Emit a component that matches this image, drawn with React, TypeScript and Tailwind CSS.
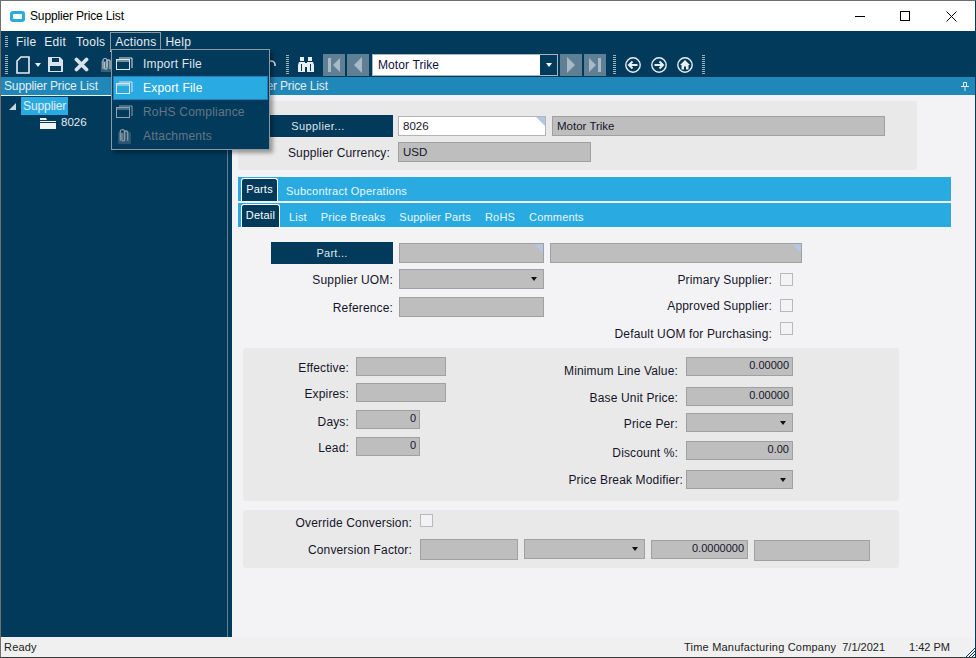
import { ReactNode } from "react"

const FONT = "font-['Liberation_Sans',Arial,sans-serif]"

type FieldProps = {
    w: string
    h?: string
    text?: string
    right?: boolean
    white?: boolean
    corner?: boolean
    drop?: boolean
    className?: string
}

const Field = ({ w, h = "h-5", text, right, white, corner, drop, className = "" }: FieldProps) => {
    return (
        <div
            className={`relative flex shrink-0 items-center border text-[#15152a] ${w} ${h} ${
                white ? "border-[#b4b4b4] bg-white" : "border-[#a0a0a0] bg-[#bebebe]"
            } ${right ? "justify-end pb-[2px] pr-[3px] text-[11px]" : "pl-1 pt-[2px] text-[11.5px]"} ${className}`}
        >
            {text}
            {corner && (
                <svg className="absolute right-0 top-0" width="9" height="9" viewBox="0 0 9 9">
                    <path d="M0 0h9v9z" fill="#b4c6e0" />
                </svg>
            )}
            {drop && (
                <svg className="absolute right-[6px] top-[7px]" width="6" height="4" viewBox="0 0 6 4">
                    <path d="M0 0h6L3 4z" fill="#111" />
                </svg>
            )}
        </div>
    )
}

const Label = ({ w, children, className = "" }: { w: string; children: ReactNode; className?: string }) => {
    return <div className={`shrink-0 text-right text-[12px] tracking-[0.15px] text-[#15152a] ${w} ${className}`}>{children}</div>
}

const Check = () => {
    return <div className="h-[13px] w-[13px] shrink-0 border border-[#b9b9b9] bg-[#f3f3f5]" />
}

const NavBtn = ({ dir, end }: { dir: "l" | "r"; end?: boolean }) => {
    return (
        <div className="flex h-[22px] w-[22px] items-center justify-center bg-[#5f7f94]">
            <svg width="14" height="16" viewBox="0 0 14 16" fill="#a9bac6">
                {dir === "l" ? <path d={end ? "M6 8l7-7v14zM1 1h3v14H1z" : "M3 8l8-8v16z"} /> : <path d={end ? "M8 8L1 1v14zM10 1h3v14h-3z" : "M11 8L3 0v16z"} />}
            </svg>
        </div>
    )
}

const Circle = ({ children }: { children: ReactNode }) => {
    return (
        <svg width="16" height="16" viewBox="0 0 16 16" fill="none" stroke="#e8eef2" strokeWidth="1.4">
            <circle cx="8" cy="8" r="7.2" />
            {children}
        </svg>
    )
}

const Grip = () => {
    return <div className="h-[19px] w-[3px] shrink-0 bg-[repeating-linear-gradient(to_bottom,#9fb2bf_0,#9fb2bf_1px,transparent_1px,transparent_2px)]" />
}

const WindowIcon = ({ muted }: { muted?: boolean }) => {
    const c = muted ? "#8fa3b1" : "#dfe6ea"
    return (
        <svg className="shrink-0" width="17" height="14" viewBox="0 0 17 14" fill="none">
            <path d="M3 1h13v10" stroke={c} />
            <rect x="0.5" y="2.5" width="13" height="10" stroke={c} />
            <path d="M1 3h12v2H1z" fill={c} opacity="0.5" />
        </svg>
    )
}

const ClipIcon = ({ color = "#8b9ba6", size = 15 }: { color?: string; size?: number }) => {
    return (
        <svg className="shrink-0" width={size} height={size + 1} viewBox="0 0 15 16" fill="none">
            <rect x="2" y="4" width="12" height="11" fill={color} opacity="0.3" />
            <path d="M4 12V3.5a2 2 0 0 1 4 0V11a1.2 1.2 0 0 1-2.4 0V5" stroke={color} strokeWidth="1.2" />
            <path d="M8 10V3.5a2 2 0 0 1 3 0V12" stroke={color} strokeWidth="1.2" />
        </svg>
    )
}

const ActionsMenu = () => {
    const item = "flex h-6 items-center gap-[10px] pl-[2px] text-[12px] tracking-[0.2px]"
    return (
        <div className="absolute left-[110px] top-[48px] z-10 h-[101px] w-[159px] border border-[#8a9aa5] bg-[#023a5c] px-[1px] pt-[2px] shadow-[3px_3px_4px_rgba(0,0,0,0.35)]">
            <div className={`${item} border border-transparent text-[#dfe6ea]`}>
                <WindowIcon />
                Import File
            </div>
            <div className={`${item} border border-[#1b7fc0] bg-[#29abe2] text-white`}>
                <WindowIcon />
                Export File
            </div>
            <div className={`${item} border border-transparent text-[#647784]`}>
                <WindowIcon muted />
                RoHS Compliance
            </div>
            <div className={`${item} border border-transparent text-[#647784]`}>
                <div className="w-[17px]">
                    <ClipIcon size={16} />
                </div>
                Attachments
            </div>
        </div>
    )
}

const TopBars = () => {
    return (
        <div className="bg-[#023a5c] text-[#e6ecf0]">
            <div className="flex h-[21px] items-center pl-1 text-[12px] tracking-[0.25px]">
                <div className="mr-[8px] h-3 w-[3px] bg-[repeating-linear-gradient(to_bottom,#9fb2bf_0,#9fb2bf_1px,transparent_1px,transparent_2px)]" />
                <span className="mr-[8px]">File</span>
                <span className="mr-[10px]">Edit</span>
                <span className="mr-[5px]">Tools</span>
                <span className="mr-[4px] border border-[#8a9aa5] border-b-white px-1">Actions</span>
                <span>Help</span>
            </div>
            <div className="flex h-[25px] items-center pl-1">
                <Grip />
                <div className="ml-[8px] flex w-[270px] items-center">
                    <svg width="14" height="18" viewBox="0 0 14 18" fill="none" stroke="#e8eef2" strokeWidth="1.6">
                        <path d="M5 1h8v16H1V5z" />
                    </svg>
                    <svg className="ml-[5px]" width="6" height="4" viewBox="0 0 6 4">
                        <path d="M0 0h6L3 4z" fill="#e8eef2" />
                    </svg>
                    <svg className="ml-[6px]" width="17" height="17" viewBox="0 0 17 17">
                        <path d="M1 1h12l3 3v12H1zM5 2v4h7V2zM3 10v5h11v-5z" fill="#d9e2e8" fillRule="evenodd" />
                    </svg>
                    <svg className="ml-[10px]" width="15" height="15" viewBox="0 0 15 15" stroke="#d9e2e8" strokeWidth="3.8" strokeLinecap="round">
                        <path d="M2.5 2.5l10 10M12.5 2.5l-10 10" />
                    </svg>
                    <div className="ml-[10px]">
                        <ClipIcon color="#b4bec5" />
                    </div>
                    <svg className="ml-auto mr-[10px]" width="10" height="10" viewBox="0 0 10 10" fill="none" stroke="#d9e2e8" strokeWidth="1.6">
                        <path d="M1 9V5a4 4 0 0 1 8 0v1" />
                    </svg>
                </div>
                <Grip />
                <svg className="ml-[9px] mr-[9px]" width="16" height="15" viewBox="0 0 16 15" fill="#e8eef2">
                    <path d="M2 0h4v4H2zM10 0h4v4h-4zM1 5h6v10H0V8zM9 5h6l1 3v7H9zM7 6h2v4H7z" />
                    <path d="M3 7h1v7H3zM12 7h1v7h-1z" fill="#023a5c" />
                </svg>
                <div className="flex items-center gap-[2px]">
                    <NavBtn dir="l" end />
                    <NavBtn dir="l" />
                </div>
                <div className="ml-[3px] flex h-[22px] w-[186px] items-center border border-[#a9b5bd] bg-white pl-[5px] text-[12px] tracking-[0.1px] text-[#101040]">
                    Motor Trike
                    <div className="ml-auto flex h-full w-[17px] items-center justify-center bg-[#023a5c]">
                        <svg width="6" height="4" viewBox="0 0 6 4">
                            <path d="M0 0h6L3 4z" fill="#fff" />
                        </svg>
                    </div>
                </div>
                <div className="ml-[2px] flex items-center gap-[2px]">
                    <NavBtn dir="r" />
                    <NavBtn dir="r" end />
                </div>
                <div className="ml-[7px]">
                    <Grip />
                </div>
                <div className="ml-[9px] flex items-center gap-[10px]">
                    <Circle>
                        <path d="M12.5 8H4M7.5 4.5L4 8l3.5 3.5" strokeWidth="2" />
                    </Circle>
                    <Circle>
                        <path d="M3.5 8H12M8.5 4.5L12 8l-3.5 3.5" strokeWidth="2" />
                    </Circle>
                    <Circle>
                        <path d="M8 3L3 8h1.5v4.5H7V9.5h2v3h2.5V8H13z" fill="#e8eef2" stroke="none" />
                    </Circle>
                </div>
                <div className="ml-[9px]">
                    <Grip />
                </div>
            </div>
            <div className="flex h-[18px] items-center bg-[#1f88b8] text-[12px] tracking-[-0.15px]">
                <div className="w-[233px] pl-[3px]">Supplier Price List</div>
                <div>Supplier Price List</div>
                <svg className="ml-auto mr-[6px]" width="8" height="9" viewBox="0 0 8 9" fill="none" stroke="#e6ecf0">
                    <path d="M0 4.5h8M2.5 0.5h3v4h-3zM4 5v4" />
                </svg>
            </div>
        </div>
    )
}

const Tree = () => {
    return (
        <div className="mt-[1px] flex w-[231px] shrink-0 border-r-[4px] border-[#023a5c] bg-[#023a5c] text-[12px] text-[#e6ecf0]">
            <div className="flex w-[227px] flex-col border-r border-[#5f7f94] pl-[7px] pt-[1px]">
                <div className="flex items-center">
                    <svg width="9" height="9" viewBox="0 0 9 9">
                        <path d="M8 1v7H1z" fill="#c9d4db" />
                    </svg>
                    <span className="ml-[4px] bg-[#29abe2] px-[2px] tracking-[-0.1px]">Supplier</span>
                </div>
                <div className="ml-[32px] mt-[-1px] flex items-center">
                    <svg width="16" height="12" viewBox="0 0 16 12">
                        <path d="M0 3V1h6l1 2z M0 4h16v1H0z M0 6h16v6H0z" fill="#f2f4f6" />
                    </svg>
                    <span className="ml-[5px] text-[11.5px]">8026</span>
                </div>
            </div>
        </div>
    )
}

const TabBars = () => {
    const tab = "flex items-center justify-center pb-[2px] text-[11px] tracking-[0.2px] border border-b-0 border-white rounded-t-[3px] bg-[#023a5c] text-white"
    const link = "text-[11px] tracking-[0.18px] text-[#eaf6fc]"
    return (
        <div className="ml-[6px] mr-[24px] mt-[7px]">
            <div className="flex h-6 items-end bg-[#29abe2] pl-[3px]">
                <div className={`${tab} h-[23px] w-[37px]`}>Parts</div>
                <span className="mb-[2px] ml-[8px] text-[11px] tracking-[0.25px] text-[#eaf6fc]">Subcontract Operations</span>
            </div>
            <div className="mt-[2px] flex h-6 items-end bg-[#29abe2] pl-[3px]">
                <div className={`${tab} h-[23px] w-[39px]`}>Detail</div>
                <div className="mb-[2px] ml-[9px] flex gap-[14px]">
                    <span className={link}>List</span>
                    <span className={link}>Price Breaks</span>
                    <span className={link}>Supplier Parts</span>
                    <span className={link}>RoHS</span>
                    <span className={link}>Comments</span>
                </div>
            </div>
        </div>
    )
}

const Left = ({ label, w, value, right, mt = "mt-[7px]", lp = "pt-[2px]" }: { label: string; w: string; value?: string; right?: boolean; mt?: string; lp?: string }) => {
    return (
        <div className={`flex h-[19px] items-center ${mt}`}>
            <Label w="w-[105px]" className={`pr-[7px] ${lp}`}>
                {label}
            </Label>
            <Field w={w} h="h-[19px]" text={value} right={right} />
        </div>
    )
}

const Right = ({ label, value, drop, pr = "pr-[8px]", lp = "", mt }: { label: string; value?: string; drop?: boolean; pr?: string; lp?: string; mt: string }) => {
    return (
        <div className={`flex h-[19px] items-center justify-end ${mt}`}>
            <Label w="w-[170px]" className={`${pr} ${lp}`}>
                {label}
            </Label>
            <Field w="w-[107px]" h="h-[19px]" text={value} right drop={drop} />
        </div>
    )
}

const App = () => {
    return (
        <div className={`relative flex h-[658px] w-[976px] flex-col overflow-hidden border border-b-[#3a3a3a] border-l-[#6f6f6f] border-r-[#023a5c] border-t-[#6f6f6f] bg-white ${FONT}`}>
            <div className="flex h-[30px] shrink-0 items-center pl-[9px] text-[12px] text-black">
                <svg width="15" height="11" viewBox="0 0 15 11">
                    <rect width="15" height="11" rx="3" fill="#29abe2" />
                    <rect x="3" y="3" width="9" height="5" rx="1" fill="#fff" />
                </svg>
                <span className="ml-[5px] tracking-[-0.15px]">Supplier Price List</span>
                <div className="ml-auto flex items-center">
                    <svg width="10" height="1" viewBox="0 0 10 1" className="mr-[35px]">
                        <path d="M0 0h10v1H0z" fill="#000" />
                    </svg>
                    <svg width="10" height="10" viewBox="0 0 10 10" className="mr-[36px]" fill="none" stroke="#000">
                        <rect x="0.5" y="0.5" width="9" height="9" />
                    </svg>
                    <svg width="11" height="11" viewBox="0 0 11 11" className="mr-[18px]" fill="none" stroke="#000">
                        <path d="M0.5 0.5l10 10M10.5 0.5l-10 10" />
                    </svg>
                </div>
            </div>

            <TopBars />
            <ActionsMenu />

            <div className="flex min-h-0 flex-1 bg-[#f3f3f6]">
                <Tree />
                <div className="flex-1">
                    <div className="ml-[6px] mt-[6px] h-[69px] w-[679px] rounded-[3px] bg-[#e9e9e9] pl-[2px] pt-[14px]">
                        <div className="flex items-center">
                            <div className="flex h-[22px] w-[153px] items-center justify-center bg-[#023a5c] pl-[3px] text-[11px] tracking-[0.4px] text-[#dfe6ea]">Supplier...</div>
                            <Field w="w-[148px]" white corner text="8026" className="ml-[5px]" />
                            <Field w="w-[333px]" text="Motor Trike" className="ml-[6px]" />
                        </div>
                        <div className="mt-[5px] flex h-5 items-center">
                            <Label w="w-[150px]" className="pt-[2px]">
                                Supplier Currency:
                            </Label>
                            <Field w="w-[193px]" text="USD" className="ml-[8px]" />
                        </div>
                    </div>

                    <TabBars />

                    <div className="ml-[39px] mt-[15px] flex items-center">
                        <div className="flex h-[22px] w-[122px] items-center justify-center bg-[#023a5c] text-[11px] tracking-[0.25px] text-[#dfe6ea]">Part...</div>
                        <Field w="w-[145px]" corner className="ml-[6px]" />
                        <Field w="w-[252px]" corner className="ml-[6px]" />
                    </div>

                    <div className="ml-[39px] mt-[5px] flex h-[67px] w-[522px] justify-between">
                        <div>
                            <div className="flex h-5 items-center">
                                <Label w="w-[122px]" className="pt-[2px]">
                                    Supplier UOM:
                                </Label>
                                <Field w="w-[145px]" drop className="ml-[6px]" />
                            </div>
                            <div className="mt-[8px] flex h-5 items-center">
                                <Label w="w-[122px]" className="pt-[2px]">
                                    Reference:
                                </Label>
                                <Field w="w-[145px]" className="ml-[6px]" />
                            </div>
                        </div>
                        <div className="flex flex-col items-end pt-[4px] text-[12px]">
                            <div className="flex h-[13px] items-center gap-[8px]">
                                <Label w="w-[170px]">Primary Supplier:</Label>
                                <Check />
                            </div>
                            <div className="mt-[13px] flex h-[13px] items-center gap-[8px]">
                                <Label w="w-[170px]">Approved Supplier:</Label>
                                <Check />
                            </div>
                            <div className="mt-[10px] flex h-[13px] items-center gap-[8px]">
                                <Label w="w-[170px]" className="pt-[10px]">
                                    Default UOM for Purchasing:
                                </Label>
                                <Check />
                            </div>
                        </div>
                    </div>

                    <div className="ml-[11px] mt-[12px] flex h-[153px] w-[656px] rounded-[3px] bg-[#e9e9e9] pt-[9px]">
                        <div className="w-[210px] pl-[8px]">
                            <Left label="Effective:" w="w-[90px]" mt="mt-0" />
                            <Left label="Expires:" w="w-[90px]" />
                            <Left label="Days:" w="w-[64px]" value="0" right mt="mt-[8px]" lp="pt-[4px]" />
                            <Left label="Lead:" w="w-[64px]" value="0" right mt="mt-[8px]" />
                        </div>
                        <div className="ml-[113px] w-[227px]">
                            <Right label="Minimum Line Value:" value="0.00000" mt="mt-0" lp="pt-[8px]" />
                            <Right label="Base Unit Price:" value="0.00000" mt="mt-[11px]" lp="pt-[2px]" />
                            <Right label="Price Per:" drop mt="mt-[7px]" lp="pt-[2px]" />
                            <Right label="Discount %:" value="0.00" mt="mt-[9px]" lp="pt-[4px]" />
                            <Right label="Price Break Modifier:" drop pr="pr-[3px]" mt="mt-[10px]" />
                        </div>
                    </div>

                    <div className="ml-[11px] mt-[9px] h-[58px] w-[656px] rounded-[3px] bg-[#e9e9e9] pt-[4px]">
                        <div className="flex h-[13px] items-center">
                            <Label w="w-[169px]" className="pt-[4px]">
                                Override Conversion:
                            </Label>
                            <div className="ml-[8px]">
                                <Check />
                            </div>
                        </div>
                        <div className="mt-[12px] flex items-start">
                            <Label w="w-[169px]" className="pt-[2px]">
                                Conversion Factor:
                            </Label>
                            <Field w="w-[98px]" h="h-[21px]" className="ml-[8px]" />
                            <Field w="w-[121px]" drop className="ml-[6px]" />
                            <Field w="w-[97px]" h="h-[19px]" text="0.0000000" right className="ml-[6px] mt-[1px]" />
                            <Field w="w-[116px]" h="h-[21px]" className="ml-[6px] mt-[1px]" />
                        </div>
                    </div>
                </div>
            </div>

            <div className="flex h-5 shrink-0 items-center bg-[#f0f0f0] pl-[3px] pt-[1px] text-[11px] text-[#222]">
                <span className="tracking-[0.2px]">Ready</span>
                <span className="ml-auto tracking-[0.2px]">Time Manufacturing Company</span>
                <span className="ml-[6px]">7/1/2021</span>
                <span className="ml-[24px] mr-[25px]">1:42 PM</span>
            </div>
            <svg className="absolute bottom-0 right-0" width="10" height="10" viewBox="0 0 10 10" stroke="#023a5c" strokeWidth="1">
                <path d="M10 1L1 10M10 4l-6 6M10 7l-3 3" />
            </svg>
        </div>
    )
}

export default App
